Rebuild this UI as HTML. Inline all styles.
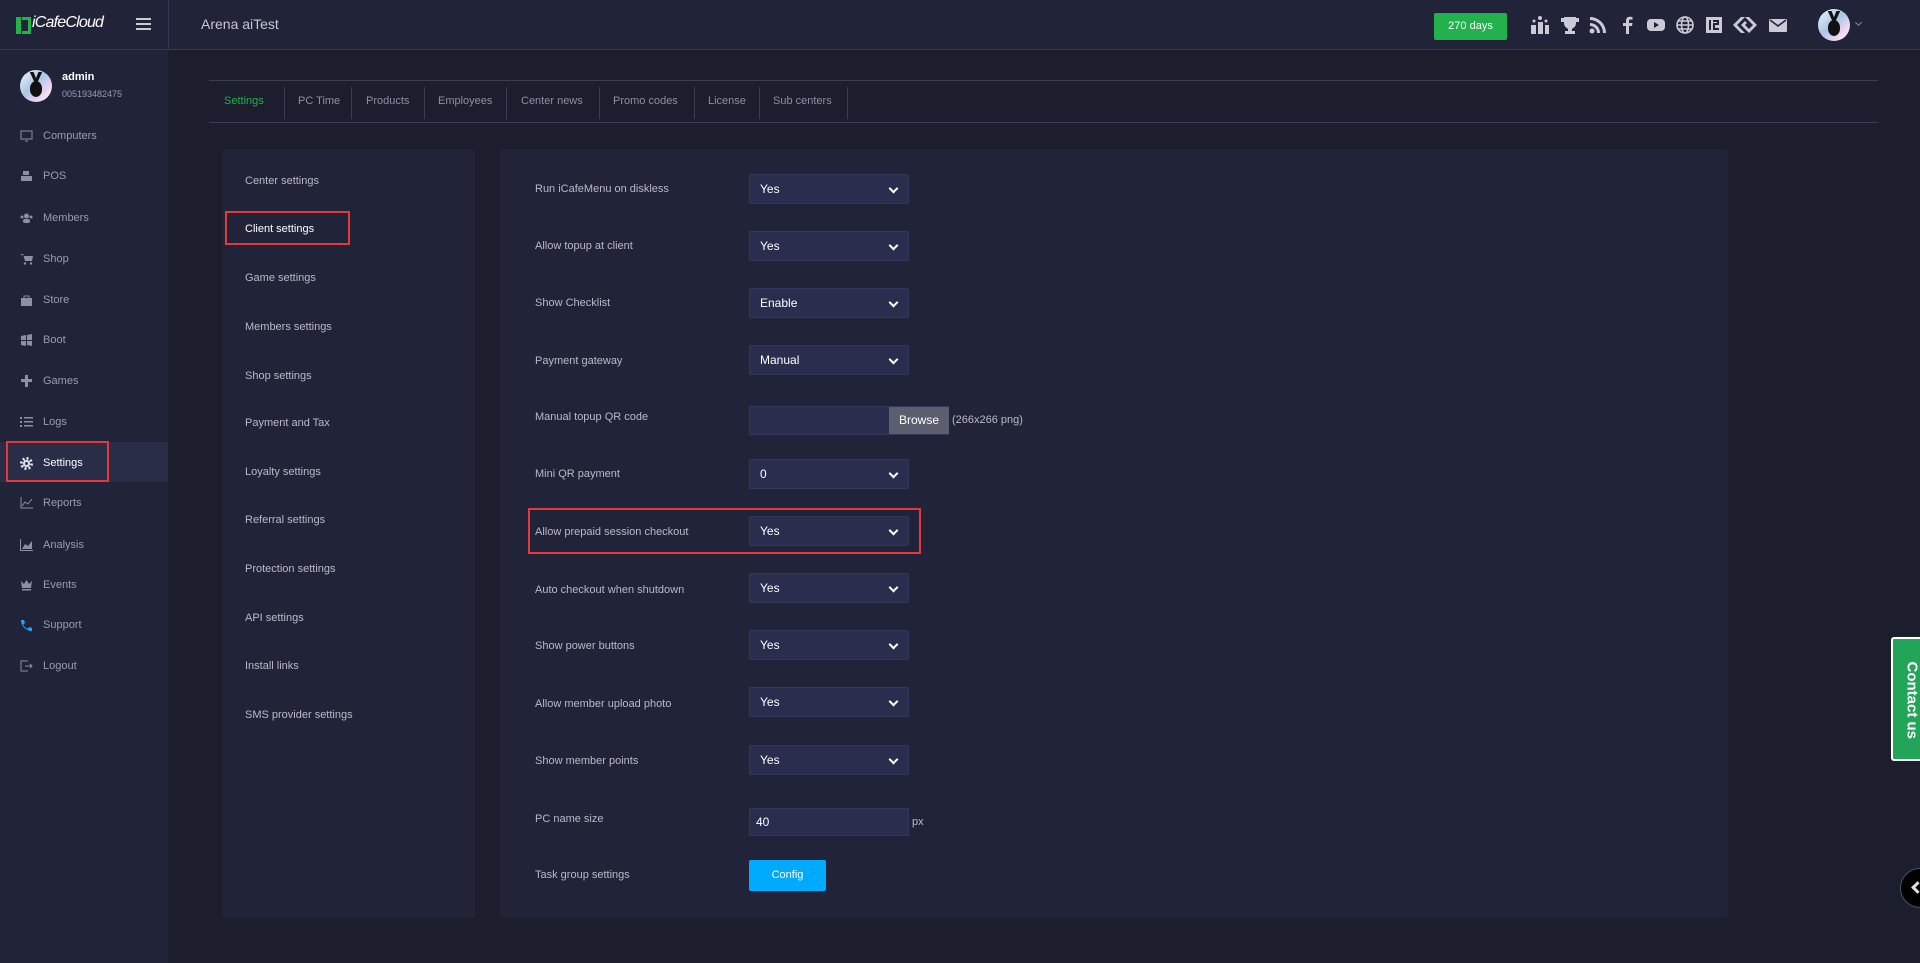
<!DOCTYPE html>
<html><head><meta charset="utf-8"><style>
*{margin:0;padding:0;box-sizing:border-box}
body{width:1920px;height:963px;background:#1c1d2d;font-family:"Liberation Sans",sans-serif;color:#b4b6c4;position:relative;overflow:hidden}
.a{position:absolute}
.hdr{left:0;top:0;width:1920px;height:50px;background:#212438;border-bottom:1px solid #34375a}
.sb{left:0;top:50px;width:168px;height:913px;background:#212438}
.si{position:absolute;left:0;width:168px;height:40px;font-size:11px;color:#9a9cae;line-height:40px;padding-left:43px}
.si svg{position:absolute;left:20px;top:14px}
.tab{position:absolute;top:80px;height:42px;line-height:42px;font-size:11px;color:#8d90a3}
.dv{position:absolute;top:87px;width:1px;height:32px;background:#3a3d55}
.lm{position:absolute;left:245px;font-size:11px;color:#b8bac7}
.lb{position:absolute;left:535px;font-size:11px;color:#b8bac7}
.sel{position:absolute;left:749px;width:160px;height:30px;background:#2a2d4d;border:1px solid #34375a;border-radius:2px;color:#fff;font-size:12px;line-height:28px;padding-left:10px}
.sel:after{content:"";position:absolute;right:11px;top:10px;width:5px;height:5px;border-right:2px solid #fff;border-bottom:2px solid #fff;transform:rotate(45deg)}
.ic{position:absolute;top:15px;width:20px;height:20px;fill:#c9cbd6}
.av{position:absolute;border-radius:50%;background:linear-gradient(135deg,#f4f4f4,#a8c8e8 45%,#e8d0f0 70%,#fff)}
.av i{position:absolute;left:30%;top:35%;width:40%;height:50%;border-radius:50%;background:#111}
.av b{position:absolute;left:30%;top:5%;width:40%;height:35%;background:#111;clip-path:polygon(0 0,30% 0,50% 60%,70% 0,100% 0,60% 100%,40% 100%)}
</style></head><body>
<div class="a hdr"></div>
<div class="a" style="left:168px;top:0;width:1px;height:50px;background:#34375a"></div>
<div class="a" style="left:16px;top:17px;width:5px;height:17px;background:#22b14c"></div>
<div class="a" style="left:22px;top:17px;width:9px;height:17px;border:3px solid #22b14c;border-left:none"></div>
<div class="a" style="left:32px;top:14px;font-size:16px;color:#fff;font-style:italic;letter-spacing:-0.8px">iCafeCloud</div>
<div class="a" style="left:136px;top:18px;width:15px;height:2px;background:#ccc;box-shadow:0 5px 0 #ccc,0 10px 0 #ccc"></div>
<div class="a" style="left:201px;top:16px;font-size:14px;color:#c5c7d3">Arena aiTest</div>
<div class="a" style="left:1434px;top:13px;width:73px;height:27px;background:#22b14c;border-radius:2px;color:#fff;font-size:11px;text-align:center;line-height:27px">270 days</div>
<svg class="ic" style="left:1530px" viewBox="0 0 20 20"><rect x="1" y="10" width="5" height="9"/><rect x="8" y="7" width="5" height="12"/><rect x="15" y="10" width="4" height="9"/><circle cx="10" cy="3" r="2"/><circle cx="4" cy="6" r="1.5"/><circle cx="16" cy="6" r="1.5"/></svg>
<svg class="ic" style="left:1560px" viewBox="0 0 20 20"><path d="M4 2h12v6a6 6 0 0 1-12 0zM1 3h3v4H1zM16 3h3v4h-3zM8 13h4v3h3v3H5v-3h3z"/></svg>
<svg class="ic" style="left:1588px" viewBox="0 0 20 20"><circle cx="4" cy="16" r="2.5"/><path d="M2 8a10 10 0 0 1 10 10h-3a7 7 0 0 0-7-7zM2 2a16 16 0 0 1 16 16h-3A13 13 0 0 0 2 5z"/></svg>
<svg class="ic" style="left:1618px" viewBox="0 0 20 20"><path d="M11 19v-8h3l.5-3H11V6c0-1 .3-1.5 1.7-1.5H14.5V2c-.5-.1-1.5-.2-2.7-.2C9.5 1.8 8 3.2 8 5.7V8H5v3h3v8z"/></svg>
<svg class="ic" style="left:1646px" viewBox="0 0 20 20"><rect x="1" y="4" width="18" height="12" rx="4"/><path d="M8 7l5 3-5 3z" fill="#212438"/></svg>
<svg class="ic" style="left:1675px;fill:none" viewBox="0 0 20 20" stroke="#c9cbd6" stroke-width="1.6"><circle cx="10" cy="10" r="8"/><ellipse cx="10" cy="10" rx="3.5" ry="8"/><path d="M2 10h16M3.5 6h13M3.5 14h13"/></svg>
<svg class="ic" style="left:1704px" viewBox="0 0 20 20"><path d="M2 2h16v16H2z"/><path d="M5 5h2v10H5zM9 5h6v5h-4v3h4v2H9v-7h4V7H9z" fill="#212438"/></svg>
<svg class="ic" style="left:1731px;width:28px" viewBox="0 0 28 20"><path d="M10 2l-8 8 8 8h4l-8-8 8-8zM14 6l-4 4 8 8 8-8-8-8h-4l8 8-4 4-4-4 2-2z"/></svg>
<svg class="ic" style="left:1768px" viewBox="0 0 20 20"><rect x="1" y="4" width="18" height="13" rx="1"/><path d="M2 5l8 6 8-6" fill="none" stroke="#212438" stroke-width="1.6"/></svg>
<div class="av" style="left:1818px;top:9px;width:32px;height:32px"><b></b><i></i></div>
<div class="a" style="left:1856px;top:20px;width:5px;height:5px;border-right:1px solid #888;border-bottom:1px solid #888;transform:rotate(45deg)"></div>

<div class="a sb"></div>
<div class="av" style="left:20px;top:70px;width:32px;height:32px"><b></b><i></i></div>
<div class="a" style="left:62px;top:71px;font-size:11px;font-weight:bold;color:#fff">admin</div>
<div class="a" style="left:62px;top:89px;font-size:9px;color:#9a9cae">005193482475</div>

<div class="si" style="top:116px"><svg width="13" height="12" viewBox="0 0 13 12" fill="none" stroke="#8d90a3"><rect x="1" y="1" width="11" height="8"/><path d="M5 11h3"/></svg>Computers</div>
<div class="si" style="top:156px"><svg width="13" height="12" viewBox="0 0 13 12" fill="#8d90a3"><rect x="1" y="6" width="11" height="5"/><rect x="3" y="1" width="6" height="4"/></svg>POS</div>
<div class="si" style="top:198px"><svg width="13" height="12" viewBox="0 0 13 12" fill="#8d90a3"><circle cx="6.5" cy="4" r="2.5"/><circle cx="2" cy="5" r="1.5"/><circle cx="11" cy="5" r="1.5"/><rect x="3" y="7" width="7" height="4" rx="2"/></svg>Members</div>
<div class="si" style="top:239px"><svg width="13" height="12" viewBox="0 0 13 12" fill="#8d90a3"><path d="M0 1h3l2 7h7l1-5H4"/><circle cx="5" cy="10.5" r="1.2"/><circle cx="11" cy="10.5" r="1.2"/></svg>Shop</div>
<div class="si" style="top:280px"><svg width="13" height="12" viewBox="0 0 13 12" fill="#8d90a3"><rect x="1" y="4" width="11" height="8"/><path d="M4 4V2h5v2" fill="none" stroke="#8d90a3"/></svg>Store</div>
<div class="si" style="top:320px"><svg width="13" height="12" viewBox="0 0 13 12" fill="#8d90a3"><path d="M1 2l5-1v5H1zM7 1l5-1v6H7zM1 7h5v5l-5-1zM7 7h5v5l-5-1z"/></svg>Boot</div>
<div class="si" style="top:361px"><svg width="13" height="12" viewBox="0 0 13 12" fill="#8d90a3"><path d="M5 0h3v4h4v3H8v5H5V7H1V4h4z"/></svg>Games</div>
<div class="si" style="top:402px"><svg width="13" height="12" viewBox="0 0 13 12" fill="#8d90a3"><rect x="0" y="1" width="2" height="2"/><rect x="0" y="5" width="2" height="2"/><rect x="0" y="9" width="2" height="2"/><rect x="4" y="1" width="9" height="1.5"/><rect x="4" y="5" width="9" height="1.5"/><rect x="4" y="9" width="9" height="1.5"/></svg>Logs</div>
<div class="a" style="left:0;top:442px;width:168px;height:40px;background:#2a2d48"></div>
<div class="a" style="left:6px;top:441px;width:103px;height:41px;border:2px solid #e5383b"></div>
<div class="si" style="top:443px;color:#fff"><svg width="13" height="13" viewBox="0 0 13 13"><circle cx="6.5" cy="6.5" r="5" fill="none" stroke="#dfe1ea" stroke-width="3" stroke-dasharray="2 1.9"/><circle cx="6.5" cy="6.5" r="3.5" fill="#dfe1ea"/><circle cx="6.5" cy="6.5" r="1.5" fill="#2a2d48"/></svg>Settings</div>
<div class="si" style="top:483px"><svg width="13" height="12" viewBox="0 0 13 12" fill="none" stroke="#8d90a3"><path d="M1 0v11h12M2 9l3-4 3 2 4-5"/></svg>Reports</div>
<div class="si" style="top:525px"><svg width="13" height="12" viewBox="0 0 13 12" fill="#8d90a3"><path d="M0 0h1v11h12v1H0zM2 10l3-5 3 2 4-5v8z"/></svg>Analysis</div>
<div class="si" style="top:565px"><svg width="13" height="12" viewBox="0 0 13 12" fill="#8d90a3"><path d="M1 2l3 3 2.5-4 2.5 4 3-3-1 7H2zM2 10h9v1.5H2z"/></svg>Events</div>
<div class="si" style="top:605px"><svg width="13" height="13" viewBox="0 0 13 13"><path d="M1 1l3-0 1 3-2 1.5c1 2 2.5 3.5 4.5 4.5L9 8l3 1v3C6 12 1 7 1 1z" fill="#1ea7fd"/></svg>Support</div>
<div class="si" style="top:646px"><svg width="13" height="12" viewBox="0 0 13 12" fill="none" stroke="#8d90a3"><path d="M8 1H1v10h7M5 6h7M10 4l2 2-2 2"/></svg>Logout</div>

<div class="a" style="left:209px;top:80px;width:1669px;height:1px;background:#3a3d55"></div>
<div class="a" style="left:209px;top:122px;width:1669px;height:1px;background:#3a3d55"></div>
<div class="tab" style="left:224px;color:#22b14c">Settings</div>
<div class="dv" style="left:284px"></div><div class="tab" style="left:298px">PC Time</div>
<div class="dv" style="left:351px"></div><div class="tab" style="left:366px">Products</div>
<div class="dv" style="left:424px"></div><div class="tab" style="left:438px">Employees</div>
<div class="dv" style="left:506px"></div><div class="tab" style="left:521px">Center news</div>
<div class="dv" style="left:599px"></div><div class="tab" style="left:613px">Promo codes</div>
<div class="dv" style="left:694px"></div><div class="tab" style="left:708px">License</div>
<div class="dv" style="left:759px"></div><div class="tab" style="left:773px">Sub centers</div>
<div class="dv" style="left:847px"></div>

<div class="a" style="left:222px;top:149px;width:253px;height:769px;background:#212438;border-radius:4px"></div>
<div class="lm" style="top:175px">Center settings</div>
<div class="a" style="left:225px;top:211px;width:125px;height:34px;border:2px solid #e5383b"></div>
<div class="lm" style="top:223px;color:#fff">Client settings</div>
<div class="lm" style="top:272px">Game settings</div>
<div class="lm" style="top:321px">Members settings</div>
<div class="lm" style="top:370px">Shop settings</div>
<div class="lm" style="top:417px">Payment and Tax</div>
<div class="lm" style="top:466px">Loyalty settings</div>
<div class="lm" style="top:514px">Referral settings</div>
<div class="lm" style="top:563px">Protection settings</div>
<div class="lm" style="top:612px">API settings</div>
<div class="lm" style="top:660px">Install links</div>
<div class="lm" style="top:709px">SMS provider settings</div>

<div class="a" style="left:500px;top:149px;width:1228px;height:769px;background:#212438;border-radius:4px"></div>
<div class="lb" style="top:183px">Run iCafeMenu on diskless</div><div class="sel" style="top:174px">Yes</div>
<div class="lb" style="top:240px">Allow topup at client</div><div class="sel" style="top:231px">Yes</div>
<div class="lb" style="top:297px">Show Checklist</div><div class="sel" style="top:288px">Enable</div>
<div class="lb" style="top:355px">Payment gateway</div><div class="sel" style="top:345px">Manual</div>
<div class="lb" style="top:411px">Manual topup QR code</div>
<div class="a" style="left:749px;top:406px;width:200px;height:29px;background:#2a2d4d;border:1px solid #34375a"></div>
<div class="a" style="left:889px;top:407px;width:60px;height:27px;background:#5b5e6e;color:#fff;font-size:12px;text-align:center;line-height:27px">Browse</div>
<div class="a" style="left:952px;top:414px;font-size:11px;color:#b8bac7">(266x266 png)</div>
<div class="lb" style="top:468px">Mini QR payment</div>
<div class="sel" style="top:459px">0</div>
<div class="a" style="left:528px;top:508px;width:393px;height:46px;border:2px solid #e5383b"></div>
<div class="lb" style="top:526px">Allow prepaid session checkout</div><div class="sel" style="top:516px">Yes</div>
<div class="lb" style="top:584px">Auto checkout when shutdown</div><div class="sel" style="top:573px">Yes</div>
<div class="lb" style="top:640px">Show power buttons</div><div class="sel" style="top:630px">Yes</div>
<div class="lb" style="top:698px">Allow member upload photo</div><div class="sel" style="top:687px">Yes</div>
<div class="lb" style="top:755px">Show member points</div><div class="sel" style="top:745px">Yes</div>
<div class="lb" style="top:813px">PC name size</div>
<div class="a" style="left:749px;top:808px;width:160px;height:28px;background:#2a2d4d;border:1px solid #34375a;color:#fff;font-size:12px;line-height:26px;padding-left:6px">40</div>
<div class="a" style="left:912px;top:816px;font-size:11px;color:#b8bac7">px</div>
<div class="lb" style="top:869px">Task group settings</div>
<div class="a" style="left:749px;top:860px;width:77px;height:31px;background:#00aaff;border-radius:2px;color:#fff;font-size:11px;text-align:center;line-height:31px">Config</div>

<div class="a" style="left:1891px;top:637px;width:32px;height:124px;background:#22a559;border:2px solid #fff;border-radius:3px 0 0 3px"></div>
<div class="a" style="left:1877px;top:688px;width:70px;font-size:15px;font-weight:bold;color:#fff;transform:rotate(90deg);white-space:nowrap;text-align:center">Contact us</div>
<div class="a" style="left:1900px;top:868px;width:40px;height:40px;border-radius:50%;background:#000;border:1px solid #3a5a6a"></div>
<div class="a" style="left:1913px;top:883px;width:9px;height:9px;border-left:3px solid #ddd;border-bottom:3px solid #ddd;transform:rotate(45deg)"></div>
</body></html>
